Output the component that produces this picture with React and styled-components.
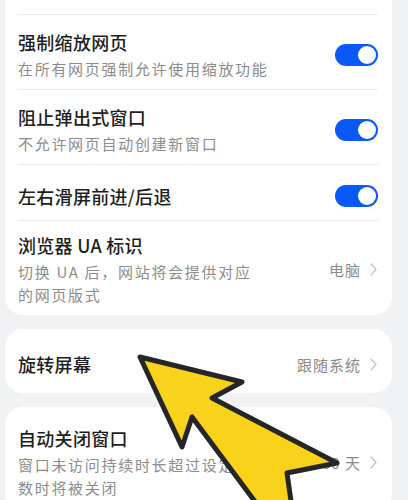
import React from 'react';
import styled, { createGlobalStyle } from 'styled-components';

const GlobalStyle = createGlobalStyle`
   html, body {
      margin: 0;
      padding: 0;
      background: #f1f2f4;
      font-family: "Noto Sans CJK SC", "Noto Sans", sans-serif;
   }
`;

const Page = styled.div`
   position: relative;
   width: 408px;
   height: 500px;
   overflow: hidden;
   background: #f1f2f4;
   padding: 0 16px 0 5px;
   box-sizing: border-box;
   display: flex;
   flex-direction: column;
   gap: 14px;
`;

const Card = styled.div`
   background: #fff;
   border-radius: 18px;
   padding: 4px 14px 4px 13px;
   margin-top: ${(p) => p.$top || 0}px;
   flex-shrink: 0;
`;

const Row = styled.div`
   display: flex;
   align-items: center;
   min-height: 56px;
   box-sizing: border-box;
   padding: ${(p) => (p.$dense ? '12px 0 5px' : '15px 0 9px')};
   border-top: ${(p) => (p.$line ? '1px solid #ebebeb' : 'none')};
`;

const Texts = styled.div`
   flex: 1;
   max-width: ${(p) => p.$max || 300}px;
   min-width: 0;
`;

const Title = styled.div`
   font-size: 18px;
   line-height: 24px;
   letter-spacing: 0.3px;
   font-weight: 500;
   color: #1e1e1e;
`;

const Sub = styled.div`
   margin-top: 3px;
   font-size: 15px;
   line-height: 23px;
   letter-spacing: 1.7px;
   color: #8c8c8c;
`;

const Right = styled.div`
   margin-left: auto;
   display: flex;
   align-items: center;
   gap: 9px;
   font-size: 15px;
   letter-spacing: 1px;
   color: #8a8a8a;
   padding-right: 1px;
`;

const Toggle = styled.div`
   margin-left: auto;
   width: 43px;
   height: 22px;
   border-radius: 11px;
   background: #0a59f7;
   position: relative;
   flex-shrink: 0;

   &::after {
      content: '';
      position: absolute;
      right: 2px;
      top: 2px;
      width: 18px;
      height: 18px;
      border-radius: 50%;
      background: #fff;
   }
`;

const Spacer = styled.div`
   height: 30px;
`;

const ArrowLayer = styled.svg`
   position: absolute;
   left: 0;
   top: 0;
   pointer-events: none;
`;

const Chevron = () => (
   <svg width="7" height="13" viewBox="0 0 7 13">
      <path d="M1 1 L6 6.5 L1 12" fill="none" stroke="#c4c4c4" strokeWidth="1.3" strokeLinecap="round" strokeLinejoin="round" />
   </svg>
);

const App = () => {
   return (
      <>
         <GlobalStyle />
         <Page>
            <Card $top={-20}>
               <Spacer />
               <Row $line>
                  <Texts>
                     <Title>强制缩放网页</Title>
                     <Sub>在所有网页强制允许使用缩放功能</Sub>
                  </Texts>
                  <Toggle />
               </Row>
               <Row $line>
                  <Texts>
                     <Title>阻止弹出式窗口</Title>
                     <Sub>不允许网页自动创建新窗口</Sub>
                  </Texts>
                  <Toggle />
               </Row>
               <Row $line>
                  <Texts>
                     <Title>左右滑屏前进/后退</Title>
                  </Texts>
                  <Toggle />
               </Row>
               <Row $line $dense>
                  <Texts $max={245}>
                     <Title>浏览器 UA 标识</Title>
                     <Sub>切换 UA 后，网站将会提供对应的网页版式</Sub>
                  </Texts>
                  <Right>
                     电脑
                     <Chevron />
                  </Right>
               </Row>
            </Card>

            <Card>
               <Row>
                  <Texts>
                     <Title>旋转屏幕</Title>
                  </Texts>
                  <Right>
                     跟随系统
                     <Chevron />
                  </Right>
               </Row>
            </Card>

            <Card>
               <Row>
                  <Texts $max={250}>
                     <Title>自动关闭窗口</Title>
                     <Sub>窗口未访问持续时长超过设定天数时将被关闭</Sub>
                  </Texts>
                  <Right>
                     30 天
                     <Chevron />
                  </Right>
               </Row>
            </Card>

            <ArrowLayer width="408" height="500" viewBox="0 0 408 500">
               <polygon
                  points="140,357 242,382 212,398 337,463 287,473 293,515 265,515 192,417 182,447"
                  fill="#f9d21c"
                  stroke="#262626"
                  strokeWidth="5"
                  strokeLinejoin="round"
               />
            </ArrowLayer>
         </Page>
      </>
   );
};

export default App;
